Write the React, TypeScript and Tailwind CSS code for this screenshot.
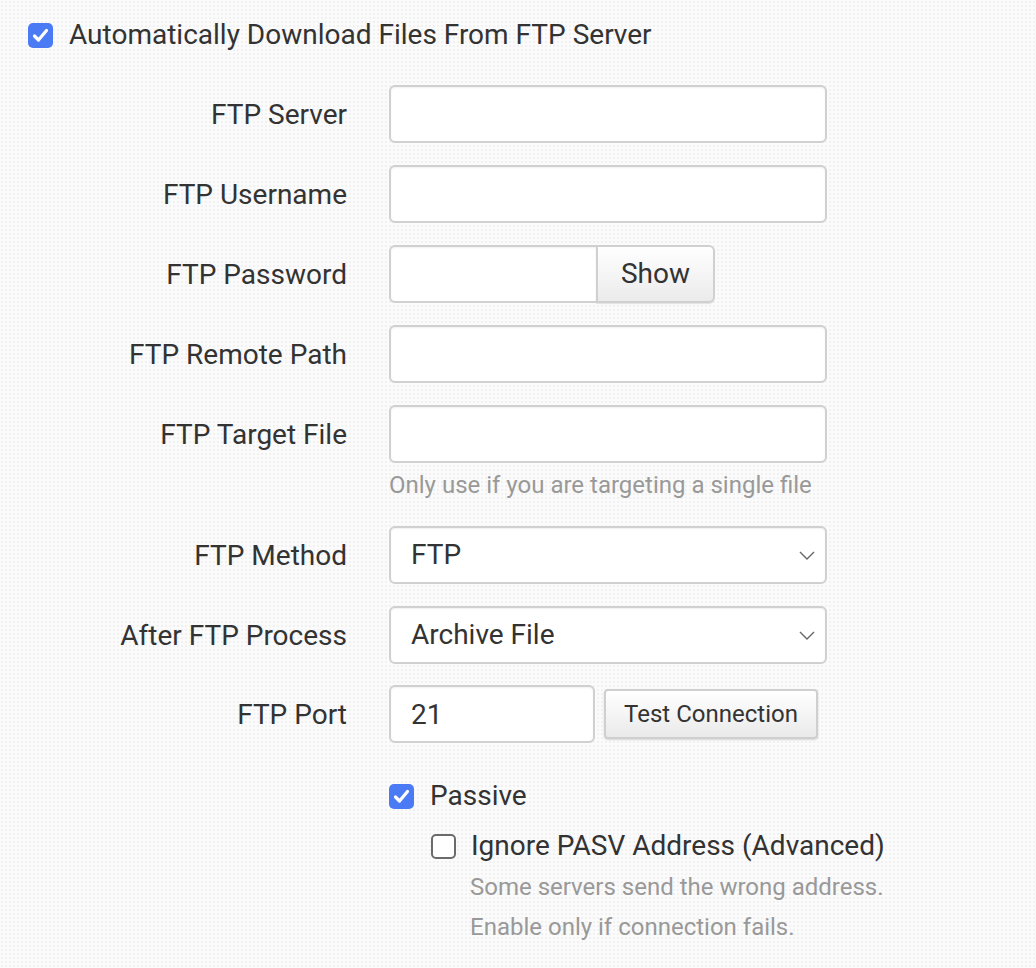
import React from "react";

const font = { fontFamily: "Roboto, 'Noto Sans', sans-serif" };

function CheckedBox() {
  return (
    <div className="w-[25px] h-[25px] rounded-[5px] bg-[#4a7bf5] flex items-center justify-center shrink-0">
      <svg width="19" height="19" viewBox="0 0 19 19" fill="none">
        <path d="M3.5 10 L7.5 14 L15.5 4.5" stroke="white" strokeWidth="3.2" strokeLinecap="round" strokeLinejoin="round" />
      </svg>
    </div>
  );
}

function EmptyBox() {
  return <div className="w-[25px] h-[25px] rounded-[5px] border-2 border-[#6b6b6b] bg-white shrink-0" />;
}

const inputCls =
  "h-[58px] rounded-[6px] border-2 border-[#d0d0d0] bg-white shadow-[inset_0_1px_2px_rgba(0,0,0,0.06)] outline-none px-[20px] text-[28px] text-[#333]";

function Chevron() {
  return (
    <svg className="absolute right-[9px] top-1/2 -translate-y-1/2" width="18" height="12" viewBox="0 0 18 12" fill="none">
      <path d="M2 3 L9 10 L16 3" stroke="#666" strokeWidth="1.4" />
    </svg>
  );
}

function Row({ label, children }: { label: string; children: React.ReactNode }) {
  return (
    <div className="flex items-center">
      <div className="w-[347px] text-right text-[28px] text-[#333] leading-none pt-[2px]">{label}</div>
      <div className="ml-[42px] flex items-center">{children}</div>
    </div>
  );
}

export default function App() {
  return (
    <div
      className="w-[1036px] min-h-[968px] bg-[#fbfbfb] bg-[radial-gradient(circle,#f1f1f1_1px,transparent_1.2px)] bg-[length:4px_4px]"
      style={font}
    >
      <div className="pt-[21px] pl-[28px] flex items-center gap-[16px]">
        <CheckedBox />
        <span className="text-[28px] text-[#333] leading-none">Automatically Download Files From FTP Server</span>
      </div>

      <div className="mt-[36px] flex flex-col">
        <Row label="FTP Server">
          <input className={`${inputCls} w-[438px]`} />
        </Row>
        <div className="h-[22px]" />
        <Row label="FTP Username">
          <input className={`${inputCls} w-[438px]`} />
        </Row>
        <div className="h-[22px]" />
        <Row label="FTP Password">
          <div className="flex">
            <input type="password" className={`${inputCls} w-[207px] rounded-r-none border-r-0`} />
            <button className="h-[58px] w-[119px] rounded-r-[6px] border-2 border-[#d0d0d0] bg-gradient-to-b from-white to-[#ebebeb] text-[28px] text-[#333] shadow-[0_1px_1px_rgba(0,0,0,0.1)]">
              Show
            </button>
          </div>
        </Row>
        <div className="h-[22px]" />
        <Row label="FTP Remote Path">
          <input className={`${inputCls} w-[438px]`} />
        </Row>
        <div className="h-[22px]" />
        <Row label="FTP Target File">
          <input className={`${inputCls} w-[438px]`} />
        </Row>
        <div className="ml-[389px] h-[41px] pt-[8px] text-[24px] leading-[28px] text-[#999]">
          Only use if you are targeting a single file
        </div>
        <div className="h-[22px]" />
        <Row label="FTP Method">
          <div className={`${inputCls} w-[438px] relative flex items-center`}>
            <span>FTP</span>
            <Chevron />
          </div>
        </Row>
        <div className="h-[22px]" />
        <Row label="After FTP Process">
          <div className={`${inputCls} w-[438px] relative flex items-center`}>
            <span>Archive File</span>
            <Chevron />
          </div>
        </Row>
        <div className="h-[21px]" />
        <Row label="FTP Port">
          <div className="flex items-center gap-[9px]">
            <input defaultValue="21" className={`${inputCls} w-[206px] px-[12px]`} />
            <button className="h-[50px] w-[214px] rounded-[4px] border-2 border-[#cfcfcf] bg-gradient-to-b from-white to-[#eaeaea] text-[24px] text-[#333] shadow-[0_1px_2px_rgba(0,0,0,0.15)]">
              Test Connection
            </button>
          </div>
        </Row>

        <div className="ml-[389px] mt-[39px] flex items-center gap-[16px]">
          <CheckedBox />
          <span className="text-[28px] text-[#333] leading-none">Passive</span>
        </div>
        <div className="ml-[431px] mt-[22px] flex flex-col">
          <div className="flex items-center gap-[15px]">
            <EmptyBox />
            <span className="text-[28px] text-[#333] leading-none">Ignore PASV Address (Advanced)</span>
          </div>
          <div className="ml-[39px] mt-[7px] text-[24px] leading-[40px] text-[#999]">
            <div>Some servers send the wrong address.</div>
            <div>Enable only if connection fails.</div>
          </div>
        </div>
      </div>
    </div>
  );
}
